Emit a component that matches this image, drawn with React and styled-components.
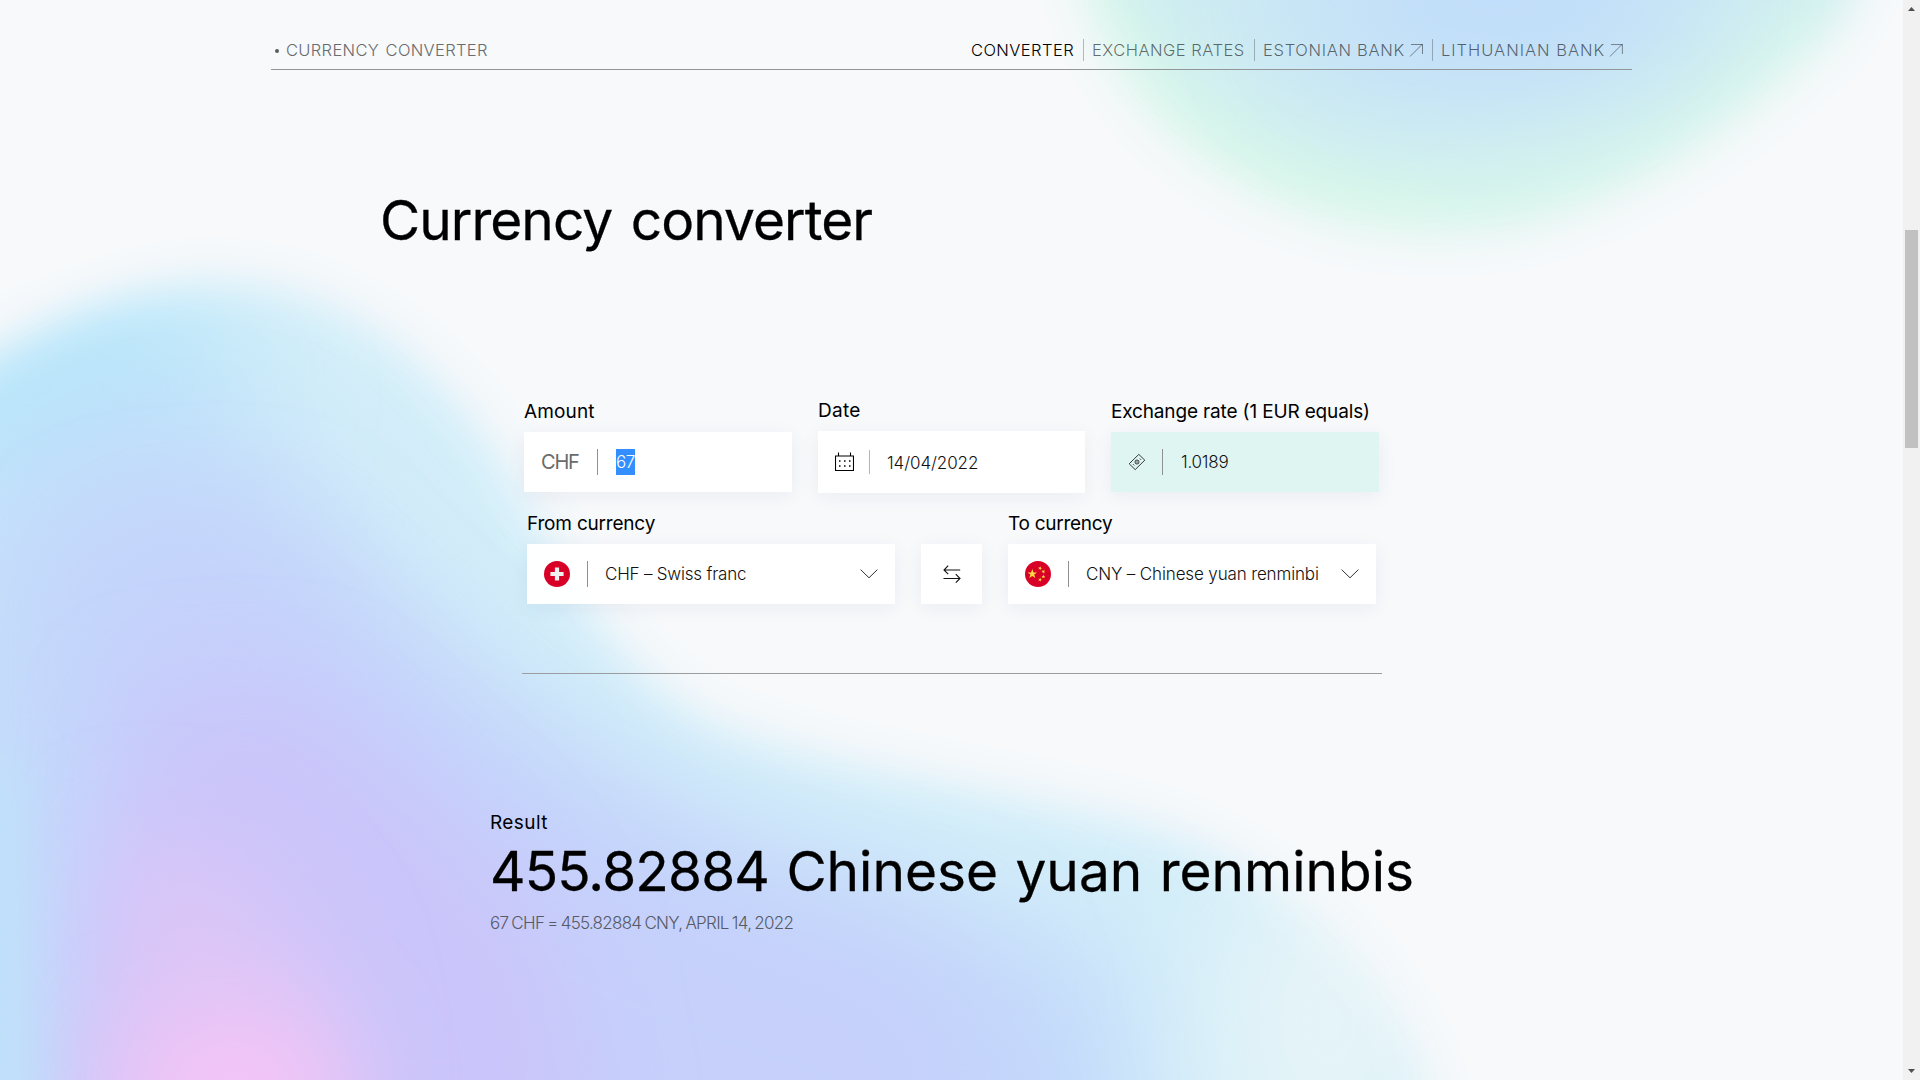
import React from "react";
import styled, { createGlobalStyle } from "styled-components";

const GlobalStyle = createGlobalStyle`
  *, *::before, *::after { box-sizing: border-box; }
  html, body { margin: 0; padding: 0; background: #f7f9fb; }
  body { font-family: Inter, "Open Sans", sans-serif; color: #000; overflow: hidden; }
  h1, h2, p { margin: 0; font-weight: 400; }
`;

const Screen = styled.div`
  display: grid;
  grid-template-columns: 1fr 17px;
  height: 1080px;
  width: 1920px;
`;

const Page = styled.div`
  position: relative;
  isolation: isolate;
  overflow: hidden;
  display: flex;
  flex-direction: column;
`;

const Backdrop = styled.svg`
  position: absolute;
  inset: 0;
  z-index: -1;
  width: 100%;
  height: 100%;
`;

const Header = styled.header`
  display: flex;
  justify-content: space-between;
  margin: 0 271px;
  padding: 31px 8px 0 3px;
  height: 70px;
  border-bottom: 1px solid #929699;
`;

const Brand = styled.div`
  display: flex;
  align-items: center;
  gap: 7px;
  height: 38px;
  font-size: 16.5px;
  font-weight: 300;
  letter-spacing: 0.33px;
  word-spacing: 1.5px;
  color: #6a6b6d;
  &::before {
    content: "";
    width: 4px;
    height: 4px;
    margin-left: 1px;
    margin-top: 1px;
    border-radius: 50%;
    background: #5c5d5f;
  }
`;

const Nav = styled.nav`
  display: flex;
  align-items: center;
  height: 38px;
`;

const NavItem = styled.a`
  display: flex;
  align-items: center;
  gap: 4px;
  height: 22px;
  line-height: 22px;
  width: ${(p) => p.$width}px;
  padding-left: 8px;
  font-size: 16.5px;
  font-weight: 300;
  white-space: nowrap;
  letter-spacing: ${(p) => p.$tracking}px;
  color: ${(p) => (p.$active ? "#000" : "rgba(0,0,0,0.58)")};
  & + & { border-left: 1px solid rgba(0, 0, 0, 0.26); }
`;

const Title = styled.h1`
  margin: 120px 0 0 380px;
  font-size: 55px;
  line-height: 60px;
  letter-spacing: -0.95px;
  word-spacing: 4px;
  -webkit-text-stroke: 0.3px #000;
`;

const Form = styled.form`
  width: 860px;
  margin: 148px 0 0 522px;
  padding: 0 2px 69px;
  border-bottom: 1px solid #9b9da1;
`;

const Row = styled.div`
  display: flex;
  align-items: ${(p) => p.$align || "center"};
  gap: 26px;
  margin: ${(p) => p.$margin || "0"};
`;

const Field = styled.div`
  width: ${(p) => p.$width}px;
`;

const Label = styled.label`
  display: block;
  height: 33px;
  padding-top: 1px;
  line-height: 24px;
  font-size: 19px;
  font-weight: 400;
  white-space: nowrap;
  letter-spacing: ${(p) => p.$tracking || 0}px;
`;

const Control = styled.div`
  display: flex;
  align-items: center;
  height: ${(p) => p.$height || 60}px;
  padding: 0 17px;
  background: ${(p) => (p.$readOnly ? "#dff5f2" : "rgba(255,255,255,0.96)")};
  box-shadow: 0 4px 20px rgba(40, 40, 110, 0.06);
`;

const Rule = styled.span`
  width: 1px;
  height: ${(p) => p.$height || 26}px;
  margin: ${(p) => p.$margin};
  background: ${(p) => p.$color || "#8f9192"};
`;

const Prefix = styled.span`
  width: 37px;
  font-size: 20px;
  letter-spacing: -1.2px;
  color: #6a6a6a;
`;

const Value = styled.span`
  font-size: 17px;
  font-weight: 300;
  line-height: 26px;
  white-space: nowrap;
  color: #111;
  padding-top: ${(p) => p.$drop || 0}px;
  letter-spacing: ${(p) => p.$tracking || 0}px;
`;

const Selected = styled(Value)`
  width: 19px;
  background: #338fff;
  color: #fff;
  letter-spacing: -0.6px;
  font-weight: 300;
`;

const Chevron = styled.svg`
  margin-left: auto;
`;

const SwapButton = styled.button`
  display: flex;
  align-items: center;
  justify-content: center;
  width: 61px;
  height: 60px;
  padding: 0;
  border: 0;
  background: #fff;
  box-shadow: 0 4px 20px rgba(40, 40, 110, 0.06);
`;

const Result = styled.section`
  margin: 137px 0 0 490px;
  white-space: nowrap;
`;

const ResultLabel = styled.p`
  font-size: 19px;
  line-height: 24px;
  letter-spacing: 0.4px;
`;

const ResultValue = styled.h2`
  margin-top: 6px;
  font-size: 55px;
  line-height: 60px;
  letter-spacing: 0px;
  word-spacing: 1.9px;
  -webkit-text-stroke: 0.3px #000;
`;

const Figure = styled.span`
  letter-spacing: -0.85px;
`;

const Note = styled.p`
  margin-top: 10px;
  font-size: 17px;
  font-weight: 300;
  line-height: 24px;
  letter-spacing: -0.72px;
  word-spacing: -1px;
  color: #555a66;
`;

const Scrollbar = styled.div`
  display: flex;
  flex-direction: column;
  align-items: center;
  justify-content: space-between;
  padding: 7px 0;
  background: #f1f1f1;
`;

const Thumb = styled.div`
  width: 13px;
  height: 218px;
  margin: 219px 0 auto;
  background: #c1c1c1;
`;

const ScrollArrow = styled.svg`
  display: block;
`;

const Backgrounds = () => (
  <Backdrop viewBox="0 0 1903 1080" preserveAspectRatio="none">
    <defs>
      <filter id="soft" x="-50%" y="-50%" width="200%" height="200%"><feGaussianBlur stdDeviation="22" /></filter>
      <filter id="softer" x="-50%" y="-50%" width="200%" height="200%"><feGaussianBlur stdDeviation="50" /></filter>
      <filter id="wide" x="-100%" y="-100%" width="300%" height="300%"><feGaussianBlur stdDeviation="62" /></filter>
      <mask id="wave" maskUnits="userSpaceOnUse" x="0" y="0" width="1903" height="1080">
        <path filter="url(#soft)" fill="#fff" d="M-200 500C-80 400 60 284 215 282C350 284 440 370 500 460C560 560 600 660 710 722C820 770 980 784 1160 830C1310 880 1390 980 1425 1080L1460 1300H-200Z" />
      </mask>
      <mask id="orb" maskUnits="userSpaceOnUse" x="900" y="-300" width="1003" height="700">
        <path filter="url(#soft)" fill="#fff" d="M1068 -120C1070 20 1130 110 1220 170C1310 230 1430 245 1530 222C1650 190 1750 115 1840 25L1900 -120Z" />
      </mask>
    </defs>
    <g mask="url(#wave)">
      <rect width="1903" height="1080" fill="#d3eef9" />
      <ellipse cx="30" cy="390" rx="210" ry="150" fill="#b9e7fa" filter="url(#wide)" />
      <path d="M-60 540L100 400L260 430L440 640L680 820L900 890L1120 960L1150 1250H-60Z" fill="#c3d9fb" filter="url(#wide)" />
      <path d="M100 560L260 540L500 770L720 880L960 960L1020 1250H60Z" fill="#c6d0fb" filter="url(#wide)" />
      <ellipse cx="1330" cy="1020" rx="110" ry="170" fill="#e6f4f8" filter="url(#wide)" />
      <path d="M140 700L300 690L480 850L560 960L600 1180H90Z" fill="#cac5fa" filter="url(#softer)" />
      <path d="M120 830L230 850L320 960L360 1180H90Z" fill="#dcc6f7" filter="url(#softer)" />
      <ellipse cx="235" cy="1090" rx="110" ry="80" fill="#f5c4f6" filter="url(#softer)" />
      <path d="M-120 760H20L40 1200H-120Z" fill="#c0e0fa" filter="url(#soft)" />
    </g>
    <g mask="url(#orb)">
      <rect x="900" y="-300" width="1003" height="700" fill="#cbe8f4" />
      <path d="M1050 -60C1080 90 1220 235 1440 225C1640 205 1750 130 1880 10" stroke="#d7f6eb" strokeWidth="150" fill="none" filter="url(#softer)" />
      <path d="M1060 -60C1070 90 1220 225 1440 225" stroke="#d7f6e9" strokeWidth="60" fill="none" filter="url(#soft)" />
      <ellipse cx="1500" cy="0" rx="190" ry="80" fill="#bfdcfb" filter="url(#wide)" />
    </g>
  </Backdrop>
);

const OutArrow = () => (
  <svg width="15" height="15" viewBox="0 0 15 15" fill="none" stroke="currentColor" strokeWidth="0.75">
    <path d="M1 13.5L13.5 1M2 1.5H13.5V11" />
  </svg>
);

const CalendarIcon = () => (
  <svg width="19" height="20" viewBox="0 0 19 20" fill="none" stroke="#000">
    <path d="M0.5 4H18.5V18.5H0.5ZM3.5 0.5V4M15.5 0.5V4" strokeWidth="1.1" />
    <path d="M4 9H5.5M9 9H10.5M14 9H15.5M4 14H5.5M9 14H10.5M14 14H15.5" strokeWidth="1.5" />
  </svg>
);

const NoteIcon = () => (
  <svg width="18" height="18" viewBox="0 0 18 18" fill="none" stroke="#222" strokeWidth="0.9">
    <path d="M1.2 10.8L10.8 1.4L16.8 7.2L7.2 16.6Z" />
    <circle cx="9" cy="9" r="2" />
    <path d="M5 11.2L6.2 12.4M11.8 5.6L13 6.8M9 8.2V9.8" />
  </svg>
);

const SwapIcon = () => (
  <svg width="18" height="18" viewBox="0 0 18 18" fill="none" stroke="#111" strokeWidth="1.1">
    <path d="M17.2 5H1.2M5.2 0.7L1 5L5.2 9.2M0.5 13.5H16.8M12.8 9.2L17 13.5L12.8 17.6" />
  </svg>
);

const SwissFlag = () => (
  <svg width="26" height="26" viewBox="0 0 26 26">
    <circle cx="13" cy="13" r="13" fill="#d80027" />
    <path d="M10.9 6.4H15.1V10.9H19.6V15.1H15.1V19.6H10.9V15.1H6.4V10.9H10.9Z" fill="#f0f0f0" />
  </svg>
);

const STAR = "M0 -5L1.2 -1.55L4.8 -1.55L1.9 0.6L3 4.1L0 2L-3 4.1L-1.9 0.6L-4.8 -1.55L-1.2 -1.55Z";

const ChineseFlag = () => (
  <svg width="26" height="26" viewBox="0 0 26 26">
    <circle cx="13" cy="13" r="13" fill="#d80027" />
    <g fill="#ffda44">
      <path d={STAR} transform="translate(7.3 13)" />
      <path d={STAR} transform="translate(15 7.2) rotate(20) scale(0.42)" />
      <path d={STAR} transform="translate(18.4 10.6) rotate(45) scale(0.42)" />
      <path d={STAR} transform="translate(18.4 15.6) scale(0.42)" />
      <path d={STAR} transform="translate(15 18.8) rotate(20) scale(0.42)" />
    </g>
  </svg>
);

const ChevronIcon = () => (
  <Chevron width="18" height="10" viewBox="0 0 18 10" fill="none" stroke="#333" strokeWidth="1">
    <path d="M0.6 0.6L9 8.8L17.4 0.6" />
  </Chevron>
);

const NAV = [
  { text: "CONVERTER", width: 120, tracking: 0.42, active: true },
  { text: "EXCHANGE RATES", width: 171, tracking: 0.49 },
  { text: "ESTONIAN BANK", width: 178, tracking: 0.69, external: true },
  { text: "LITHUANIAN BANK", width: 192, tracking: 0.98, external: true },
];

export default function App() {
  return (
    <>
      <GlobalStyle />
      <Screen>
        <Page>
          <Backgrounds />
          <Header>
            <Brand>CURRENCY CONVERTER</Brand>
            <Nav>
              {NAV.map((item) => (
                <NavItem key={item.text} $width={item.width} $tracking={item.tracking} $active={item.active}>
                  {item.text}
                  {item.external && <OutArrow />}
                </NavItem>
              ))}
            </Nav>
          </Header>

          <Title>Currency converter</Title>

          <Form>
            <Row>
              <Field $width={268}>
                <Label $tracking={0.15}>Amount</Label>
                <Control>
                  <Prefix>CHF</Prefix>
                  <Rule $margin="0 18px 0 19px" />
                  <Selected>67</Selected>
                </Control>
              </Field>
              <Field $width={267}>
                <Label $tracking={0.3}>Date</Label>
                <Control $height={62}>
                  <CalendarIcon />
                  <Rule $height={24} $color="#b5b5b5" $margin="0 17px 0 15px" />
                  <Value $drop={2} $tracking={-0.1}>14/04/2022</Value>
                </Control>
              </Field>
              <Field $width={268}>
                <Label $tracking={-0.15}>Exchange rate (1 EUR equals)</Label>
                <Control $readOnly>
                  <NoteIcon />
                  <Rule $margin="0 18px 0 16px" />
                  <Value $tracking={-0.23}>1.0189</Value>
                </Control>
              </Field>
            </Row>

            <Row $align="flex-end" $margin="18px 0 0 3px">
              <Field $width={368}>
                <Label $tracking={-0.2}>From currency</Label>
                <Control>
                  <SwissFlag />
                  <Rule $margin="0 17px" />
                  <Value $tracking={-0.2}>CHF – Swiss franc</Value>
                  <ChevronIcon />
                </Control>
              </Field>
              <SwapButton type="button"><SwapIcon /></SwapButton>
              <Field $width={368}>
                <Label $tracking={-0.28}>To currency</Label>
                <Control>
                  <ChineseFlag />
                  <Rule $margin="0 17px" />
                  <Value $tracking={-0.14}>CNY – Chinese yuan renminbi</Value>
                  <ChevronIcon />
                </Control>
              </Field>
            </Row>
          </Form>

          <Result>
            <ResultLabel>Result</ResultLabel>
            <ResultValue><Figure>455.82884</Figure> Chinese yuan renminbis</ResultValue>
            <Note>67 CHF = 455.82884 CNY, APRIL 14, 2022</Note>
          </Result>
        </Page>

        <Scrollbar>
          <ScrollArrow width="7" height="4" viewBox="0 0 7 4"><path d="M0 4L3.5 0L7 4Z" fill="#505050" /></ScrollArrow>
          <Thumb />
          <ScrollArrow width="7" height="4" viewBox="0 0 7 4"><path d="M0 0L3.5 4L7 0Z" fill="#505050" /></ScrollArrow>
        </Scrollbar>
      </Screen>
    </>
  );
}
